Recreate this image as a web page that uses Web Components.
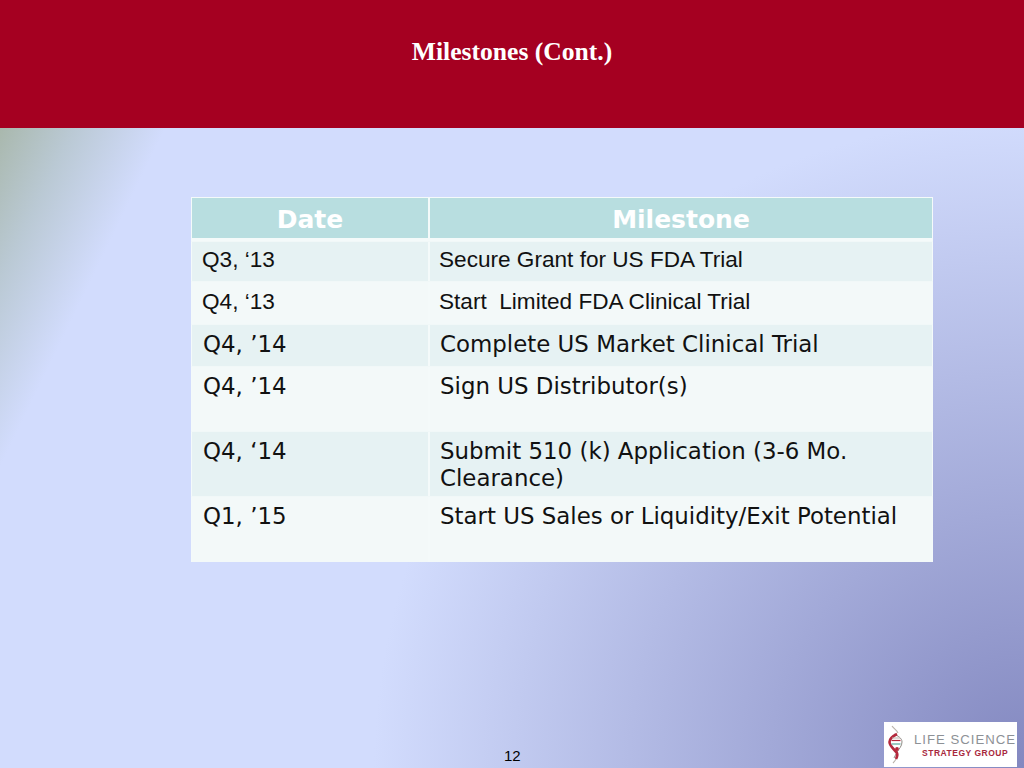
<!DOCTYPE html>
<html lang="en">
<head>
<meta charset="utf-8">
<title>Milestones (Cont.)</title>
<style>
html, body { margin: 0; height: 100%; }
</style>
</head>
<body>
<slide-page>
    <span slot="title">Milestones (Cont.)</span>
    <milestone-table>
        <milestone-row head h="44" lh="37" date="Date" text="Milestone"></milestone-row>
        <milestone-row arial odd h="40" lh="36" date="Q3, ‘13" text="Secure Grant for US FDA Trial"></milestone-row>
        <milestone-row arial h="43" lh="40" date="Q4, ‘13" text="Start&nbsp; Limited FDA Clinical Trial"></milestone-row>
        <milestone-row odd h="42" date="Q4, ’14" text="Complete US Market Clinical Trial"></milestone-row>
        <milestone-row h="65" date="Q4, ’14" text="Sign US Distributor(s)"></milestone-row>
        <milestone-row odd h="65" date="Q4, ‘14" text="Submit 510 (k) Application (3-6 Mo. Clearance)"></milestone-row>
        <milestone-row h="66" date="Q1, ’15" text="Start US Sales or Liquidity/Exit Potential"></milestone-row>
    </milestone-table>
    <span slot="page">12</span>
    <brand-logo slot="logo"></brand-logo>
</slide-page>
<script>
customElements.define("slide-page", class extends HTMLElement {
    constructor() {
        super()
            .attachShadow({ mode: "open" })
            .innerHTML = `
            <style>
            :host {
                display: grid;
                grid-template-rows: 128px 1fr auto;
                width: 1024px;
                height: 768px;
                overflow: hidden;
                background:
                    linear-gradient(116deg, #a9b8ad 56px, #bac9d4 122px, rgba(210,220,253,0) 205px),
                    radial-gradient(circle 650px at 100% 100%, #8388c0 0, #d2dcfd 100%);
                background-color: #d2dcfd;
            }
            header {
                background: #a50021;
                color: #fff;
                font: bold 25.6px "Liberation Serif", serif;
                text-align: center;
                padding-top: 38px;
                box-sizing: border-box;
                line-height: 28px;
            }
            main {
                padding: 69px 91px 0 191px;
            }
            footer {
                display: grid;
                grid-template-columns: 1fr auto;
                align-items: end;
                padding: 0 7px 1px 504px;
                color: #000;
                font: 15px "Liberation Sans", Arial, sans-serif;
            }
            .page {
                padding-bottom: 3px;
            }
            </style>
            <header><slot name="title"></slot></header>
            <main><slot></slot></main>
            <footer>
                <span class="page"><slot name="page"></slot></span>
                <slot name="logo"></slot>
            </footer>`;
    }
});

customElements.define("milestone-table", class extends HTMLElement {
    constructor() {
        super()
            .attachShadow({ mode: "open" })
            .innerHTML = `
            <style>
            :host {
                display: block;
                width: 742px;
                box-sizing: border-box;
                border-top: 1px solid #f4fafa;
            }
            </style>
            <slot></slot>`;
    }
});

customElements.define("milestone-row", class extends HTMLElement {
    constructor() {
        super().attachShadow({ mode: "open" });
    }
    connectedCallback() {
        const head = this.hasAttribute("head");
        const arial = this.hasAttribute("arial");
        const odd = this.hasAttribute("odd");
        const bg = head ? "#b8dee0" : odd ? "#e6f2f3" : "#f3f9f9";
        const h = this.getAttribute("h") - (head ? 1 : 0);
        const lh = this.getAttribute("lh") || 27;
        this.shadowRoot.innerHTML = `
            <style>
            :host {
                display: grid;
                grid-template-columns: 236px 1fr;
                height: ${h}px;
                box-sizing: border-box;
                color: ${head ? "#fff" : "#111"};
                font: ${head ? "bold 25px" : arial ? "22.6px" : "22.9px"} ${arial ? '"Liberation Sans", Arial' : '"DejaVu Sans", Verdana'}, sans-serif;
                line-height: ${lh}px;
                ${head ? "border-bottom: 3px solid #f4fafa;" : ""}
                border-left: 1px solid #f4fafa;
                border-right: 1px solid #f4fafa;
                ${head ? "" : "border-top: 1px solid #f1f8f8;"}
            }
            div {
                background: ${bg};
                ${head ? "text-align: center; padding-top: 3px;" : `padding: ${arial ? "0 9px 0 10px" : "6px 10px 0 11px"};`}
            }
            div + div {
                border-left: 2px solid #f4fafa;
                ${head ? "" : arial ? "padding-left: 9px;" : "padding-left: 10px;"}
            }
            </style>
            <div>${this.getAttribute("date")}</div>
            <div>${this.getAttribute("text")}</div>`;
    }
});

customElements.define("brand-logo", class extends HTMLElement {
    constructor() {
        super()
            .attachShadow({ mode: "open" })
            .innerHTML = `
            <style>
            :host {
                display: flex;
                align-items: center;
                width: 133px;
                height: 45px;
                box-sizing: border-box;
                padding-left: 4px;
                gap: 6px;
                background: #fff;
            }
            svg { width: 20px; height: 40px; flex: none; }
            .words { display: grid; justify-items: center; width: 100px; padding-top: 1px; }
            .a { color: #8d9196; font: 13.2px/17px "Liberation Sans", Arial, sans-serif; letter-spacing: 1px; white-space: nowrap; }
            .b { color: #a8283c; font: bold 8.5px/11px "Liberation Sans", Arial, sans-serif; letter-spacing: .5px; white-space: nowrap; }
            </style>
            <svg viewBox="0 0 20 40" fill="none" aria-hidden="true">
                <path d="M4 1C6 4 9 5 10 8" stroke="#b9b2aa" stroke-width="1.1"/>
                <path d="M8 34C7 36 6 37 5 38" stroke="#b9b2aa" stroke-width="1.1"/>
                <path d="M6 9C10 11 14 13 14 17C14 21 11 24 9 27C8 29 7 31 6 33" stroke="#8f8a84" stroke-width="1"/>
                <path d="M9 9C5 11 1.500 13 1.500 17C1.500 21 6 24 9 28C10 30 9 32 8 34" stroke="#b4283c" stroke-width="2.6"/>
                <path d="M4 13H12" stroke="#b9b2aa" stroke-width="1"/>
                <path d="M3.500 15.500H12.500" stroke="#b4283c" stroke-width="1.2"/>
                <path d="M3.500 19H12.500" stroke="#6fb3a8" stroke-width="1.4"/>
                <circle cx="9" cy="24" r="1.900" fill="#b4283c"/>
            </svg>
            <div class="words"><span class="a">LIFE SCIENCE</span><span class="b">STRATEGY GROUP</span></div>`;
    }
});
</script>
</body>
</html>
